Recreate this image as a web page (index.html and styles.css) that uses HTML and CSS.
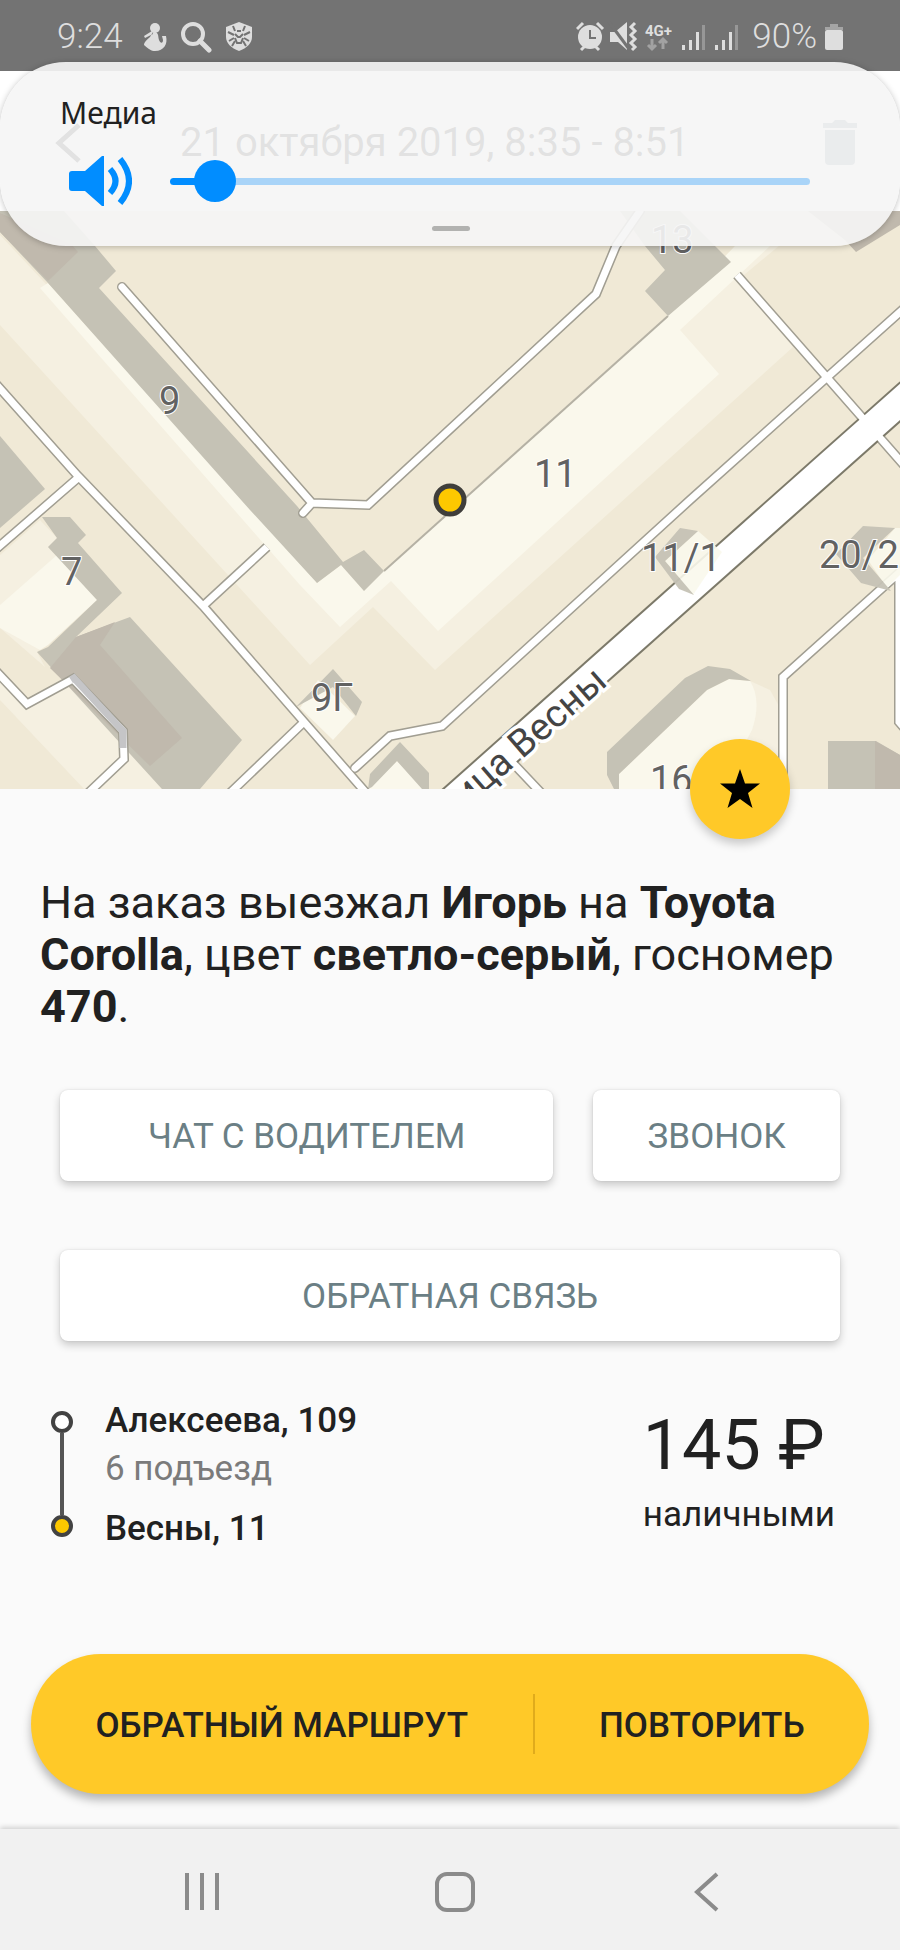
FILE: index.html
```html
<!DOCTYPE html>
<html lang="ru">
<head>
<meta charset="utf-8">
<meta name="viewport" content="width=device-width, initial-scale=1">
<title>Поездка</title>
<link rel="stylesheet" href="styles.css">
</head>
<body>
<div class="screen">
  <div class="status">
    <div class="status-group">
      <span class="status-text">9:24</span>
      <svg class="status-notices" width="112" height="32" viewBox="0 0 112 32" fill="currentColor" aria-hidden="true">
        <circle cx="14" cy="7" r="5"/><path d="M11 10L3 15l1 2 8-4M14 11c4 1 3 5 4 8 1 3 4 4 4 0l-1-4 4 0c2 8-2 15-11 15-4 0-6-2-11-6 0-3 3-5 6-8 2-3 2-5 5-5z"/>
        <circle cx="52" cy="13" r="10" fill="none" stroke="currentColor" stroke-width="4"/><path d="M59 20l9 9" stroke="currentColor" stroke-width="5" stroke-linecap="round"/>
        <path d="M98 1l13 5v10c0 6-5 11-13 14-8-3-13-8-13-14V6z"/>
        <g fill="none" stroke="#737373" stroke-width="2"><path d="M92 5l2 5m10-5l-2 5M87 11l6 3m16-3l-6 3M88 20l5-3m15 3l-5-3M91 25l3-5m11 5l-3-5"/><path d="M94 13l3 3h2l3-3M94 17l2 5h4l2-5M96 10h4"/></g>
      </svg>
    </div>
    <div class="status-group">
      <svg width="170" height="32" viewBox="0 0 170 32" fill="currentColor" aria-hidden="true">
        <circle cx="14" cy="16" r="12"/><path d="M1 8l6-6M21 2l6 6M5 29l4-4M19 25l4 4" stroke="currentColor" stroke-width="3"/><path d="M14 9v8h6" fill="none" stroke="#737373" stroke-width="2"/>
        <path d="M34 11h5L51 1v28l-9-8h-8z"/><path d="M33 1l20 27" stroke="#737373" stroke-width="3"/><path d="M59 2l-4 4 4 4-4 4 4 4-4 4 4 4-3 3" fill="none" stroke="currentColor" stroke-width="3"/>
        <text class="network" x="69" y="15">4G+</text>
        <path d="M76 18v10m-4-4l4 4 4-4M87 28V18m-4 4l4-4 4 4" fill="none" stroke="#a2a2a2" stroke-width="3"/>
        <g id="signal"><path d="M106 24h3v5h-3zM113 19h3v10h-3zM120 11h3v18h-3z"/><path d="M126 4h3v25h-3z" fill="#979797"/></g>
        <use href="#signal" x="33"/>
      </svg>
      <span class="status-text percent">90%</span>
      <svg class="battery" width="20" height="28" viewBox="0 0 20 28" aria-hidden="true"><path d="M6 1h8v3h5v3H1V4h5z" fill="#a5a5a5"/><rect x="1" y="7" width="18" height="20" rx="2" fill="currentColor"/></svg>
    </div>
  </div>

  <header class="header">
    <button class="icon-button" aria-label="Назад"><svg width="28" height="40" viewBox="0 0 28 40" fill="none" stroke="currentColor" stroke-width="5"><path d="M25 2L5 20l20 18"/></svg></button>
    <h1 class="title">21 октября 2019, 8:35 - 8:51</h1>
    <button class="icon-button trash" aria-label="Удалить"><svg width="36" height="46" viewBox="0 0 36 46" fill="currentColor"><path d="M1 3h9l3-3h10l3 3h9v5H1zM3 10h30v31q0 4-4 4H7q-4 0-4-4z"/></svg></button>
  </header>

  <section class="volume">
    <label class="volume-label" for="volume">Медиа</label>
    <div class="volume-row">
      <svg width="64" height="52" viewBox="0 0 64 52" aria-hidden="true"><path d="M4 16h13L34 1h2v50h-2L17 36H4q-3 0-3-3V19q0-3 3-3z" fill="#018dff"/><g fill="none" stroke="#018dff" stroke-width="6"><path d="M42 14q11 12 0 24"/><path d="M52 4q18 22 0 44"/></g></svg>
      <input class="slider" id="volume" type="range" min="0" max="100" value="4">
    </div>
    <div class="handle"></div>
  </section>

  <main class="main">
    <div class="map">
      <svg class="map-canvas" viewBox="0 211 900 578" role="img" aria-label="Карта">
        <g fill="#f5f0e1">
          <path d="M0 235L45 283L317 583L341 565L384 571L665 318L740 252L760 245H780L738 280L793 347L435 670L373 607L310 665L0 325z"/>
          <path d="M40 520L57 538L48 547L97 600L37 652L45 667L0 628V555z"/>
          <path d="M0 670L27 705L72 684L162 789H84L0 700z"/>
          <path d="M750 681L770 690L780 708V789H720z"/>
        </g>
        <g fill="#faf8ec">
          <path d="M48 283L317 583L341 565L364 591L384 571L665 318L735 246H770L680 330L719 374L438 631L391 581L340 627L300 585L40 288z"/>
          <path d="M0 605L57 555L97 600L48 645L40 650L0 628z"/>
          <path d="M318 680L355 716L333 740L300 708z"/>
          <path d="M397 761L424 789H368z"/>
          <path d="M619 774L707 690L729 679L750 681Q762 700 752 730L720 789H619z"/>
        </g>
        <path d="M384 571L668 316" stroke="#b5b1a4" stroke-width="2"/>
        <g fill="#c5c2b5">
          <path d="M0 232V211H64L95 246L116 271L99 288L297 506L343 562L364 550L384 571L364 591L341 565L317 583L250 510L48 283z"/>
          <path d="M0 436L45 489L0 528z"/>
          <path d="M42 517H70L86 535L78 543L122 593L76 637L130 617L242 740L200 789H162L37 652L48 647L97 600L48 547L57 538z"/>
          <path d="M620 211H680L731 262L668 316L645 291L665 270L645 246z"/>
          <path d="M333 669L362 702L356 716L333 687L296 707z"/>
          <path d="M368 789L370 774L400 742L429 773V789H422L397 761L372 787z"/>
          <path d="M607 752L685 678L708 666L730 669L751 681L729 679L707 690L619 774V789H614L607 775z"/>
          <path d="M828 741H876L900 755V789H828z"/>
        </g>
        <g fill="#c0b9ad">
          <path d="M0 232V213L72 245L78 252L48 281z"/>
          <path d="M76 637L115 622L100 645L182 738L150 766L50 668z"/>
          <path d="M875 741L900 755V789H875z"/>
          <path d="M808 211H900V225L856 252L845 240z"/>
        </g>

        <g class="road-edge">
          <path d="M122 287L312 503L368 505L596 294L616 246L640 211M312 503L303 513"/>
          <path d="M-5 383L78 476L203 606L305 723L368 795M79 477L-5 550M303 723L230 793"/>
          <path class="butt" d="M203 606L267 547M737 275L910 472"/>
          <path d="M355 768L390 736L442 726L690 500L910 303M510 760L545 797"/>
          <path d="M910 563L783 677V797M899 575V722L912 737"/>
          <path d="M-5 670L27 704L73 679L123 731L124 759L84 797"/>
        </g>
        <path d="M910 393L420 829" stroke="#7c7969" stroke-width="31"/>
        <path d="M910 393L420 829" stroke="#fff" stroke-width="27"/>
        <g class="road">
          <path d="M122 287L312 503L368 505L596 294L616 246L640 211M312 503L303 513"/>
          <path d="M-5 383L78 476L203 606L305 723L368 795M79 477L-5 550M303 723L230 793"/>
          <path class="butt" d="M203 606L267 547M737 275L910 472"/>
          <path d="M355 768L390 736L442 726L690 500L910 303M510 760L545 797"/>
          <path d="M910 563L783 677V797M899 575V722L912 737"/>
          <path d="M-5 670L27 704L73 679L123 731L124 759L84 797"/>
        </g>
        <path d="M71 680L74 678L123 731V748" fill="none" stroke="#c5c5c7" stroke-width="7"/>
        <g fill="#faf8ec" opacity=".9"><path d="M698 531L722 552L693 595L665 561z"/><path d="M895 528H900V575L887 588L868 560z"/></g>
        <g fill="#c5c2b5" opacity=".95">
          <path d="M680 528L698 531L665 561L694 595L679 589L655 557z"/>
          <path d="M863 526L895 528L863 558L891 591L861 583L836 554z"/>
        </g>

        <g class="map-label">
          <text x="159" y="414">9</text>
          <text x="534" y="487">11</text>
          <text x="641" y="571">11/1</text>
          <text x="819" y="568">20/2</text>
          <text x="61" y="585">7</text>
          <text x="311" y="711">9Г</text>
          <text x="650" y="793">16</text>
          <text x="651" y="253">13</text>
          <text class="street" text-anchor="end" transform="translate(609 684) rotate(-41)">улица Весны</text>
        </g>
        <circle cx="450" cy="500" r="14" fill="#fdc800" stroke="#3f3e3b" stroke-width="5"/>
      </svg>
      <button class="favorite" aria-label="В избранное"><svg width="42" height="40" viewBox="0 0 42 40"><path d="M21 0l5 14.500h15L29 24l4.500 15L21 30 8.500 39 13 24 1 14.500h15z"/></svg></button>
    </div>

    <div class="details">
      <p class="summary">На заказ выезжал <b>Игорь</b> на <b>Toyota Corolla</b>, цвет <b>светло-серый</b>, госномер <b>470</b>.</p>

      <div class="actions">
        <button class="action">ЧАТ С ВОДИТЕЛЕМ</button>
        <button class="action">ЗВОНОК</button>
        <button class="action wide">ОБРАТНАЯ СВЯЗЬ</button>
      </div>

      <div class="trip">
        <div class="route-line"><span class="stop"></span><span class="leg"></span><span class="stop finish"></span></div>
        <div class="route">
          <div class="address">Алексеева, 109</div>
          <div class="entrance">6 подъезд</div>
          <div class="address">Весны, 11</div>
        </div>
        <div class="payment">
          <div class="price">145 ₽</div>
          <div class="method">наличными</div>
        </div>
      </div>
    </div>

    <div class="order">
      <button class="order-button">ОБРАТНЫЙ МАРШРУТ</button>
      <span class="divider"></span>
      <button class="order-button repeat">ПОВТОРИТЬ</button>
    </div>
  </main>

  <nav class="nav">
    <button class="nav-button" aria-label="Недавние"><svg width="40" height="42" viewBox="0 0 40 42"><path d="M4 2v37M19 2v37M34 2v37"/></svg></button>
    <button class="nav-button" aria-label="Домой"><svg width="42" height="42" viewBox="0 0 42 42"><rect x="3" y="3" width="36" height="36" rx="10"/></svg></button>
    <button class="nav-button" aria-label="Назад"><svg width="40" height="42" viewBox="0 0 40 42"><path d="M31 3L11 21l20 18"/></svg></button>
  </nav>
</div>
</body>
</html>
```
FILE: styles.css
```css
* {
  box-sizing: border-box;
}

body {
  margin: 0;
  background: #fafafa;
  color: #212121;
  font-family: Roboto, "Noto Sans", sans-serif;
}

button {
  margin: 0;
  padding: 0;
  border: 0;
  background: none;
  color: inherit;
  font: inherit;
  cursor: pointer;
}

svg {
  display: block;
}

.screen {
  position: relative;
  display: flex;
  flex-direction: column;
  min-height: 100vh;
}

/* System status bar */
.status {
  display: flex;
  justify-content: space-between;
  height: 71px;
  padding: 17px 56px 14px 57px;
  background: #737373;
  color: #dedede;
}

.status-group {
  display: flex;
  align-items: center;
  height: 40px;
}

.status-text {
  font-size: 35px;
  font-weight: 300;
  line-height: 40px;
}

.status-notices {
  margin-left: 18px;
}

.percent {
  margin-left: 6px;
}

.battery {
  margin-left: 7px;
}

.network {
  font-size: 15px;
  font-weight: 700;
}

/* Page header */
.header {
  display: flex;
  align-items: center;
  height: 140px;
  padding: 4px 42px 0 54px;
  background: #fff;
}

.icon-button {
  flex: none;
}

.trash {
  color: #78909c;
}

.title {
  flex: 1;
  margin: 0 0 0 98px;
  font-size: 40px;
  font-weight: 400;
  line-height: 44px;
}

/* Volume overlay */
.volume {
  position: absolute;
  z-index: 2;
  top: 62px;
  left: 0;
  right: 0;
  height: 184px;
  padding: 31px 90px 0 60px;
  border-radius: 66px;
  background: rgba(245, 245, 245, .91);
  box-shadow: 0 1px 6px rgba(0, 0, 0, .25);
}

.volume-label {
  display: block;
  font-family: "Noto Sans", sans-serif;
  font-size: 30px;
  line-height: 40px;
}

.volume-row {
  display: flex;
  align-items: center;
  gap: 38px;
  height: 52px;
  margin: 22px 0 0 8px;
}

.slider {
  flex: 1;
  min-width: 0;
  height: 42px;
  margin: 0;
  appearance: none;
  background: none;
}

.slider::-webkit-slider-runnable-track {
  height: 7px;
  border-radius: 4px;
  background: linear-gradient(to right, #018dff 7%, #a9d4f8 7%);
}

.slider::-webkit-slider-thumb {
  width: 42px;
  height: 42px;
  margin-top: -18px;
  appearance: none;
  border-radius: 50%;
  background: #018dff;
}

.handle {
  position: absolute;
  bottom: 15px;
  left: 50%;
  width: 38px;
  height: 5px;
  margin-left: -18px;
  border-radius: 3px;
  background: #b2b2b0;
}

/* Map */
.main {
  flex: 1;
}

.map {
  position: relative;
}

.map-canvas {
  width: 100%;
  height: auto;
  background: #f0e9d6;
}

.road,
.road-edge {
  fill: none;
  stroke: #fff;
  stroke-width: 7px;
  stroke-linecap: round;
}

.road-edge {
  stroke: #a19e92;
  stroke-width: 10px;
}

.butt {
  stroke-linecap: butt;
}

.map-label {
  fill: #626262;
  stroke: #fff;
  stroke-width: 2px;
  paint-order: stroke;
  font-size: 38px;
}

.street {
  fill: #444;
  stroke-width: 7px;
}

.favorite {
  position: absolute;
  right: 110px;
  bottom: -50px;
  display: grid;
  place-items: center;
  width: 100px;
  height: 100px;
  border-radius: 50%;
  background: #ffc928;
  box-shadow: 0 5px 10px rgba(0, 0, 0, .2);
}

/* Trip details */
.details {
  padding: 88px 60px 0;
}

.summary {
  margin: 0 -20px 57px;
  font-size: 45px;
  line-height: 52px;
}

.summary b {
  font-weight: 700;
}

.actions {
  display: grid;
  grid-template-columns: 2fr 1fr;
  gap: 69px 40px;
}

.action {
  height: 91px;
  padding-top: 2px;
  border-radius: 8px;
  background: #fff;
  box-shadow: 0 4px 8px rgba(0, 0, 0, .2), 0 0 2px rgba(0, 0, 0, .12);
  color: #6b7f85;
  font-size: 35px;
}

.wide {
  grid-column: 1 / -1;
}

.trip {
  display: flex;
  margin: 60px -9px 0;
}

.route-line {
  display: flex;
  flex-direction: column;
  align-items: center;
  height: 126px;
  margin-top: 10px;
}

.stop {
  width: 22px;
  height: 22px;
  border: 4px solid #424242;
  border-radius: 50%;
  background: #fff;
}

.finish {
  background: #fdc800;
}

.leg {
  flex: 1;
  width: 4px;
  background: #555;
}

.route {
  flex: 1;
  margin-left: 32px;
  font-size: 35px;
  line-height: 40px;
}

.address {
  font-weight: 500;
}

.entrance {
  margin: 8px 0 20px;
  color: #7b7b7b;
}

.payment {
  padding-right: 14px;
}

.price {
  margin-top: 3px;
  font-size: 70px;
  line-height: 82px;
}

.method {
  margin-top: 9px;
  font-size: 35px;
  line-height: 40px;
}

/* Order bar */
.order {
  display: flex;
  align-items: center;
  height: 140px;
  margin: 105px 31px 35px;
  border-radius: 70px;
  background: #ffc928;
  box-shadow: 0 6px 10px rgba(0, 0, 0, .28);
}

.order-button {
  flex: 3;
  height: 100%;
  padding-top: 2px;
  font-size: 35px;
  font-weight: 500;
}

.repeat {
  flex: 2;
}

.divider {
  width: 2px;
  height: 60px;
  background: #e0ab1c;
}

/* System navigation */
.nav {
  display: flex;
  align-items: center;
  justify-content: space-between;
  height: 121px;
  padding: 4px 174px 0 183px;
  background: #f1f1f1;
  box-shadow: 0 -2px 5px rgba(0, 0, 0, .16);
}

.nav-button svg {
  fill: none;
  stroke: #8b8b8b;
  stroke-width: 4px;
}
```
